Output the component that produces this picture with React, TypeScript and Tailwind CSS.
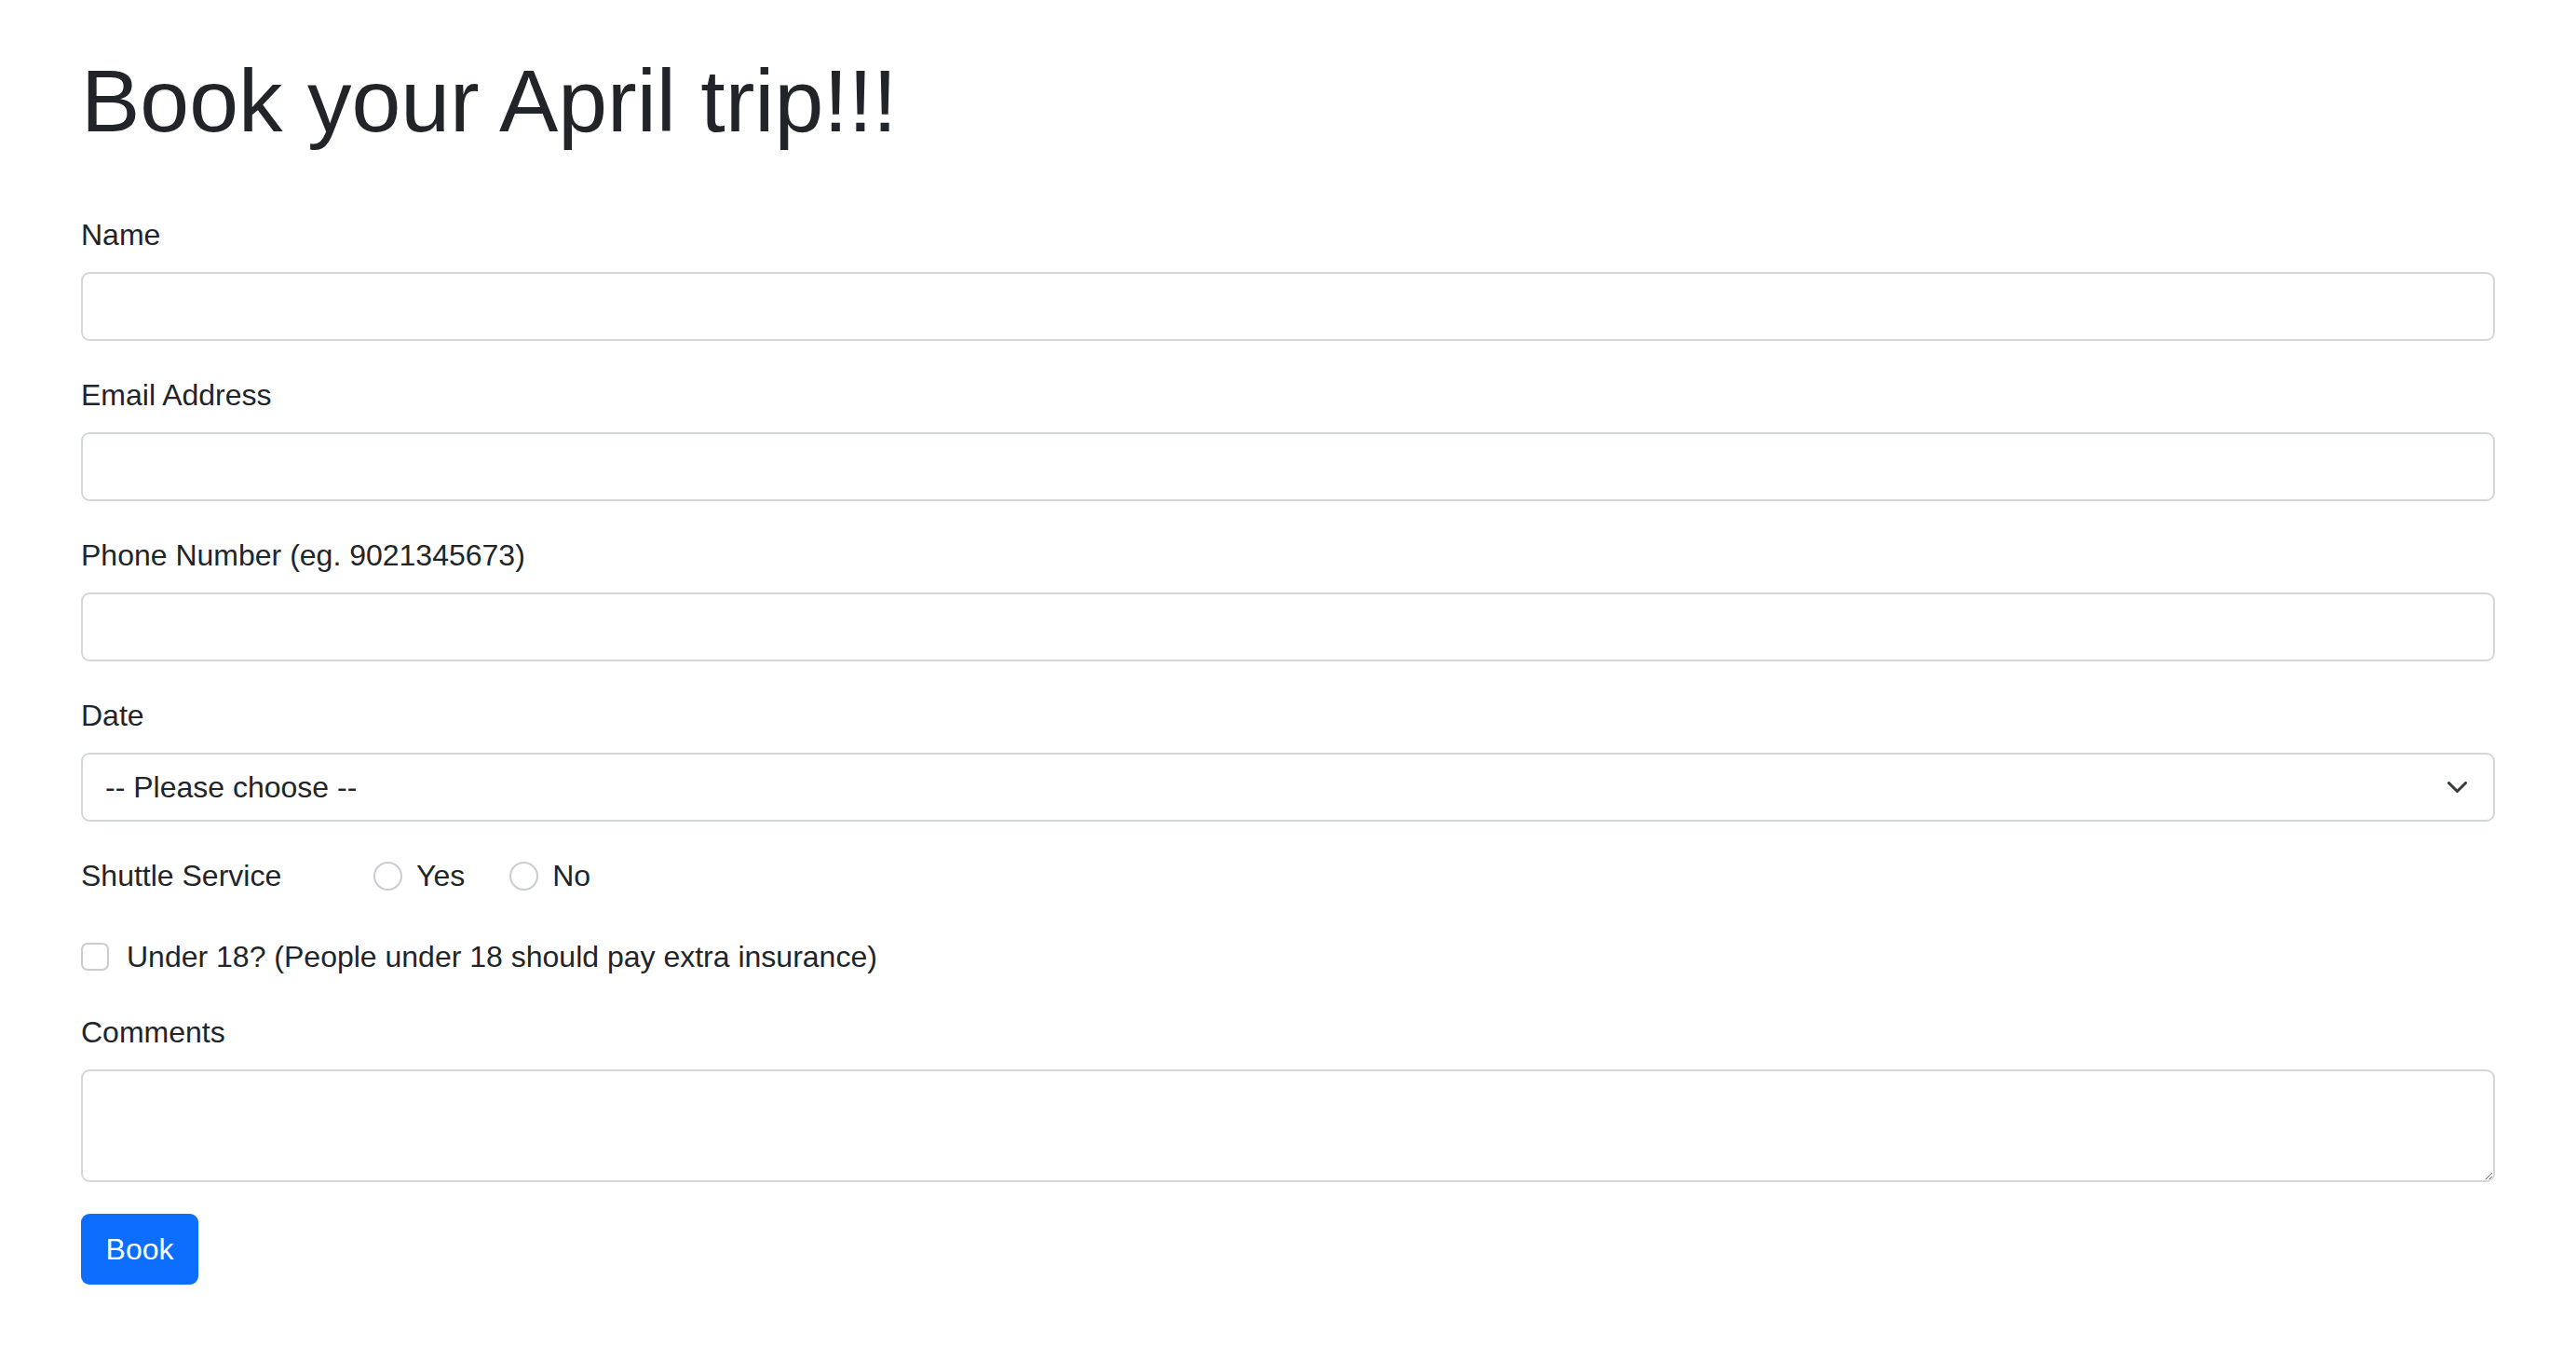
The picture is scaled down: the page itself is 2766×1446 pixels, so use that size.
import { useState } from 'react'

const fieldClass =
  'block w-full h-[74px] px-[24px] rounded-[9px] border-2 border-[#d3d7dc] bg-white text-[32px] text-[#212529] outline-none'

type FieldProps = {
  id: string
  label: string
  type?: string
}

function Field({ id, label, type = 'text' }: FieldProps) {
  return (
    <div className="mb-[35px]">
      <label htmlFor={id} className="block mb-[17px] leading-[46px]">
        {label}
      </label>
      <input id={id} type={type} className={fieldClass} />
    </div>
  )
}

function Radio({ name, value, label }: { name: string; value: string; label: string }) {
  return (
    <label className="flex items-center gap-[15px]">
      <input
        type="radio"
        name={name}
        value={value}
        className="appearance-none w-[31px] h-[31px] rounded-full border-2 border-[#c9ccd0] bg-white m-0"
      />
      <span>{label}</span>
    </label>
  )
}

export default function App() {
  const [date, setDate] = useState('')

  return (
    <div
      className="min-h-screen bg-white text-[#212529] text-[32px] px-[87px] pt-[51px]"
      style={{ fontFamily: '"Liberation Sans", Arial, sans-serif' }}
    >
      <h1 className="text-[95px] leading-[1.2] font-normal mb-[64px]">Book your April trip!!!</h1>

      <form onSubmit={(e) => e.preventDefault()}>
        <Field id="name" label="Name" />
        <Field id="email" label="Email Address" type="email" />
        <Field id="phone" label="Phone Number (eg. 9021345673)" type="tel" />

        <div className="mb-[35px]">
          <label htmlFor="date" className="block mb-[17px] leading-[46px]">
            Date
          </label>
          <div className="relative">
            <select
              id="date"
              value={date}
              onChange={(e) => setDate(e.target.value)}
              className={`${fieldClass} appearance-none`}
            >
              <option value="">-- Please choose --</option>
              <option value="apr-5">April 5</option>
              <option value="apr-12">April 12</option>
              <option value="apr-19">April 19</option>
            </select>
            <svg
              className="absolute right-[30px] top-[31px] pointer-events-none"
              width="21"
              height="12"
              viewBox="0 0 21 12"
              fill="none"
            >
              <path d="M1.5 1.5l9 9 9-9" stroke="#343a40" strokeWidth="3" strokeLinecap="round" strokeLinejoin="round" />
            </svg>
          </div>
        </div>

        <div className="flex items-center leading-[46px] mb-[41px]">
          <span className="w-[314px]">Shuttle Service</span>
          <div className="flex items-center gap-[48px]">
            <Radio name="shuttle" value="yes" label="Yes" />
            <Radio name="shuttle" value="no" label="No" />
          </div>
        </div>

        <label className="flex items-center gap-[19px] leading-[46px] mb-[35px]">
          <input
            type="checkbox"
            className="appearance-none w-[30px] h-[30px] rounded-[7px] border-2 border-[#c9ccd0] bg-white m-0"
          />
          <span>Under 18? (People under 18 should pay extra insurance)</span>
        </label>

        <div className="mb-[34px]">
          <label htmlFor="comments" className="block mb-[17px] leading-[46px]">
            Comments
          </label>
          <textarea
            id="comments"
            className="block w-full h-[121px] px-[24px] py-[12px] rounded-[9px] border-2 border-[#d3d7dc] bg-white text-[32px] outline-none"
          />
        </div>

        <button
          type="submit"
          className="w-[126px] h-[76px] rounded-[9px] bg-[#0d6efd] text-white text-[32px] leading-none"
        >
          Book
        </button>
      </form>
    </div>
  )
}
